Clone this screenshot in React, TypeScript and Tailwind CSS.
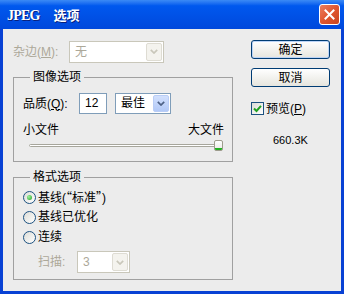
import React from "react";

const Chevron = ({ color }: { color: string }) => (
  <svg width="8" height="5" viewBox="0 0 8 5">
    <path d="M0.8 0.8 L4 4 L7.2 0.8" stroke={color} strokeWidth="1.7" fill="none" />
  </svg>
);

const Radio = ({ checked }: { checked?: boolean }) => (
  <div className="w-[13px] h-[13px] rounded-full border border-[#1c5180] bg-gradient-to-br from-[#dcdcd6] to-white flex items-center justify-center">
    {checked && <div className="w-[5px] h-[5px] rounded-full bg-[radial-gradient(circle_at_35%_35%,#9ef29e,#21a121)]" />}
  </div>
);

export default function App() {
  return (
    <div className="w-[344px] h-[294px] flex flex-col bg-[#0841d4] font-['Liberation_Sans','Noto_Sans_CJK_SC',sans-serif] text-[12px] text-black">
      {/* Title bar */}
      <div className="h-[29px] flex items-center justify-between pl-[7px] pr-[4px] bg-gradient-to-b from-[#3b8af5] via-[#0058ee] via-20% to-[#0048dc]">
        <div className="flex items-center text-white font-bold text-[13px] [text-shadow:1px_1px_0_#0a1f7a] mt-[1px]">
          <span className="font-['Liberation_Serif',serif] text-[14px] tracking-[-0.8px]">JPEG</span>
          <span className="ml-[14px] font-['Noto_Sans_CJK_SC',sans-serif]">选项</span>
        </div>
        <div className="w-[21px] h-[21px] rounded-[3px] border border-white bg-gradient-to-br from-[#ea7d5e] via-[#e0562f] to-[#c9441f] flex items-center justify-center">
          <svg width="11" height="11" viewBox="0 0 11 11">
            <path d="M1.5 1.5 L9.5 9.5 M9.5 1.5 L1.5 9.5" stroke="white" strokeWidth="2" strokeLinecap="square" />
          </svg>
        </div>
      </div>

      {/* Body */}
      <div className="flex-1 mx-[3px] mb-[3px] bg-[#ececec] flex">
        {/* Left column */}
        <div className="w-[230px] pl-[10px] pt-[12px]">
          <div className="flex items-center h-[21px]">
            <div className="w-[56px] text-[#aca899]">
              杂边(<span className="underline">M</span>):
            </div>
            <div className="flex h-[22px] w-[95px] border border-[#c9c7ba] bg-white p-[1px]">
              <div className="flex-1 pl-[4px] text-[#aca899] leading-[18px]">无</div>
              <div className="w-[16px] h-full flex items-center justify-center bg-[#f4f3ee] border border-[#dedcd3] rounded-[2px]">
                <Chevron color="#c9c7ba" />
              </div>
            </div>
          </div>

          {/* Group 1 */}
          <div className="relative mt-[15px] h-[85px] border border-[#a0a0a0] pt-[15px] pl-[9px]">
            <div className="absolute top-[-8px] left-[16px] px-[3px] bg-[#ececec] leading-[14px]">图像选项</div>
            <div className="flex items-center h-[21px]">
              <div className="w-[56px]">
                品质(<span className="underline">Q</span>):
              </div>
              <div className="w-[28px] h-[21px] border border-[#7f9db9] bg-white pl-[5px] leading-[19px]">12</div>
              <div className="ml-[8px] flex h-[21px] w-[56px] border border-[#7f9db9] bg-white p-[1px]">
                <div className="flex-1 pl-[4px] leading-[17px]">最佳</div>
                <div className="w-[16px] h-full flex items-center justify-center bg-gradient-to-b from-[#d2e0fd] to-[#b2c9f7] border border-[#b9cdf6] rounded-[2px]">
                  <Chevron color="#4d6185" />
                </div>
              </div>
            </div>
            <div className="mt-[9px] flex justify-between pr-[8px] leading-[14px]">
              <span>小文件</span>
              <span>大文件</span>
            </div>
            <div className="relative mt-[3px] ml-[6px] w-[192px] h-[11px]">
              <div className="absolute left-0 right-0 top-[4px] h-[3px] rounded-[2px] border border-[#a7a69c] bg-white" />
              <div className="absolute left-[185px] top-0 w-[9px] h-[11px] rounded-[2px] border border-[#9d9b8c] bg-gradient-to-b from-white to-[#e8e8e2] overflow-hidden flex flex-col justify-end">
                <div className="h-[2px] bg-[#21b121]" />
              </div>
            </div>
          </div>

          {/* Group 2 */}
          <div className="relative mt-[15px] h-[103px] border border-[#a0a0a0] pt-[9px] pl-[9px]">
            <div className="absolute top-[-8px] left-[16px] px-[3px] bg-[#ececec] leading-[14px]">格式选项</div>
            <div className="flex items-center h-[20px]">
              <Radio checked />
              <span className="ml-[2px]">
                基线(<span className="font-['Noto_Sans_CJK_SC',sans-serif]">“</span>标准<span className="font-['Noto_Sans_CJK_SC',sans-serif]">”</span>)
              </span>
            </div>
            <div className="flex items-center h-[20px]">
              <Radio />
              <span className="ml-[2px]">基线已优化</span>
            </div>
            <div className="flex items-center h-[20px]">
              <Radio />
              <span className="ml-[2px]">连续</span>
            </div>
            <div className="mt-[4px] flex items-center pl-[15px]">
              <div className="w-[39px] text-[#aca899]">扫描:</div>
              <div className="flex h-[22px] w-[53px] border border-[#c9c7ba] bg-white p-[1px]">
                <div className="flex-1 pl-[4px] text-[#aca899] leading-[18px]">3</div>
                <div className="w-[16px] h-full flex items-center justify-center bg-[#f4f3ee] border border-[#dedcd3] rounded-[2px]">
                  <Chevron color="#c9c7ba" />
                </div>
              </div>
            </div>
          </div>
        </div>

        {/* Right column */}
        <div className="ml-[18px] pt-[11px] flex flex-col">
          <div className="w-[79px] h-[19px] rounded-[3px] border border-[#003c74] bg-gradient-to-b from-white to-[#e6e5de] shadow-[inset_0_0_0_1px_#bcd4f6] flex items-center justify-center leading-none">
            确定
          </div>
          <div className="mt-[9px] w-[79px] h-[19px] rounded-[3px] border border-[#003c74] bg-gradient-to-b from-white to-[#e6e5de] flex items-center justify-center leading-none">
            取消
          </div>
          <div className="mt-[15px] flex items-center h-[13px]">
            <div className="w-[13px] h-[13px] border border-[#1c5180] bg-gradient-to-br from-[#dcdcd6] to-white flex items-center justify-center">
              <svg width="9" height="9" viewBox="0 0 9 9">
                <path d="M1 4.5 L3.5 7 L8 1.8" stroke="#21a121" strokeWidth="2" fill="none" />
              </svg>
            </div>
            <span className="ml-[2px]">
              预览(<span className="underline">P</span>)
            </span>
          </div>
          <div className="mt-[18px] pl-[22px] text-[11px] leading-[14px]">660.3K</div>
        </div>
      </div>
    </div>
  );
}
